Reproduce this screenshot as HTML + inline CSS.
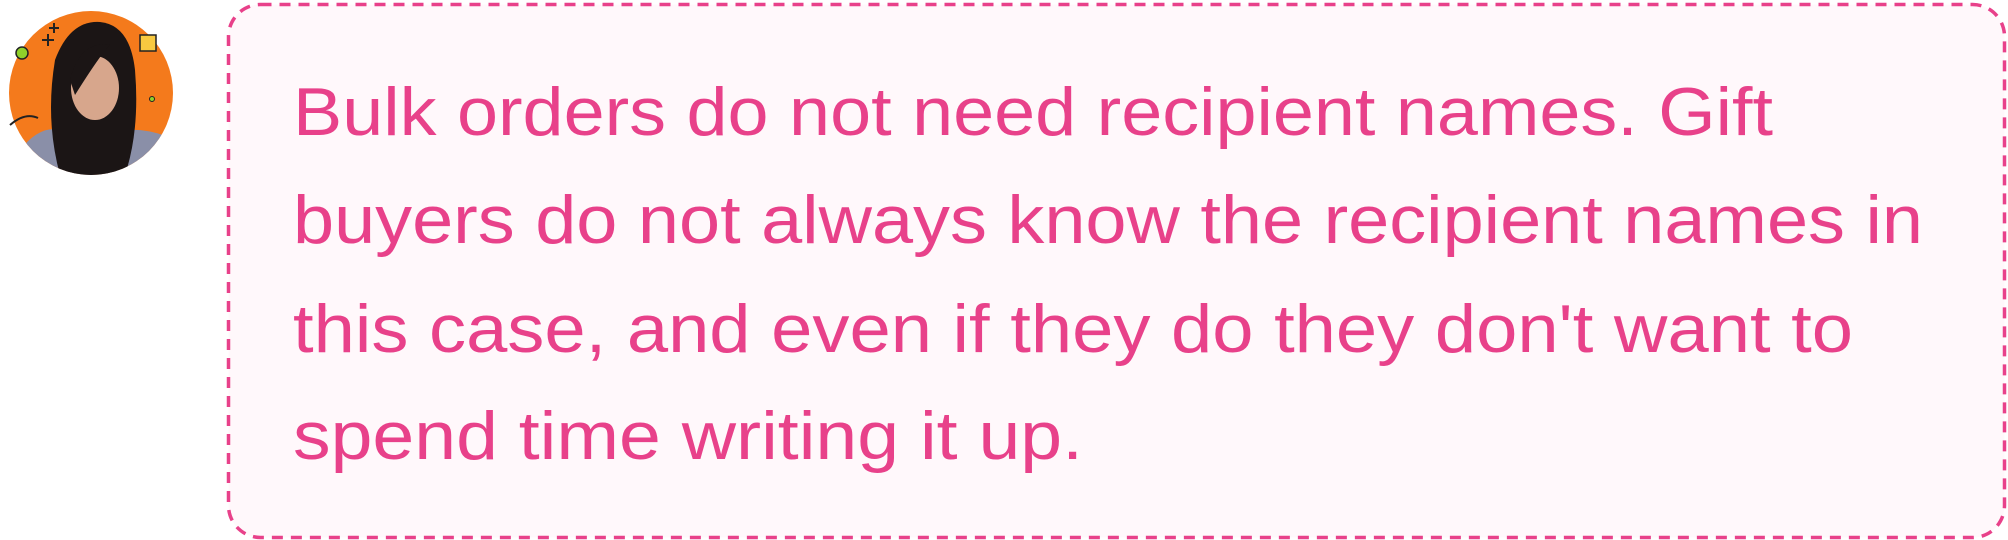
<!DOCTYPE html>
<html><head><meta charset="utf-8"><style>
html,body{margin:0;padding:0;background:#fff;width:2008px;height:540px;overflow:hidden}
</style></head><body>
<svg width="2008" height="540" xmlns="http://www.w3.org/2000/svg">
<defs><clipPath id="c"><circle cx="91" cy="93" r="82"/></clipPath></defs>
<g clip-path="url(#c)">
<rect x="0" y="0" width="200" height="200" fill="#f47a1c"/>
<path d="M20 150 Q40 125 60 130 L125 130 Q150 128 175 140 L175 180 L20 180Z" fill="#8a8fa8"/>
<path d="M60 175 Q45 120 55 60 Q70 20 100 22 Q130 25 135 70 Q140 130 125 175Z" fill="#1b1515"/>
<ellipse cx="95" cy="88" rx="24" ry="32" fill="#d7a68c"/>
<path d="M70 80 Q80 40 110 45 Q100 55 75 95Z" fill="#1b1515"/>
</g>
<circle cx="22" cy="53" r="6" fill="#8fd12a" stroke="#222" stroke-width="1.5"/>
<path d="M42 40 h12 M48 34 v12 M49 28 h10 M54 23 v10" stroke="#222" stroke-width="2"/>
<rect x="140" y="35" width="16" height="16" fill="#f8c940" stroke="#222" stroke-width="1.5"/>
<circle cx="152" cy="99" r="2.5" fill="#8fd12a" stroke="#222"/>
<path d="M10 125 Q25 112 38 118" stroke="#222" stroke-width="2" fill="none"/>
<rect x="228.5" y="4.5" width="1776" height="533" rx="32" fill="#fff8fb" stroke="#e8418a" stroke-width="3.5" stroke-dasharray="11 8"/>
<g font-family="Liberation Sans, sans-serif" font-size="68" fill="#e8418a">
<text x="293" y="135" textLength="1480" lengthAdjust="spacingAndGlyphs">Bulk orders do not need recipient names. Gift</text>
<text x="293" y="243" textLength="1630" lengthAdjust="spacingAndGlyphs">buyers do not always know the recipient names in</text>
<text x="293" y="352" textLength="1560" lengthAdjust="spacingAndGlyphs">this case, and even if they do they don't want to</text>
<text x="293" y="459" textLength="790" lengthAdjust="spacingAndGlyphs">spend time writing it up.</text>
</g>
</svg>
</body></html>
